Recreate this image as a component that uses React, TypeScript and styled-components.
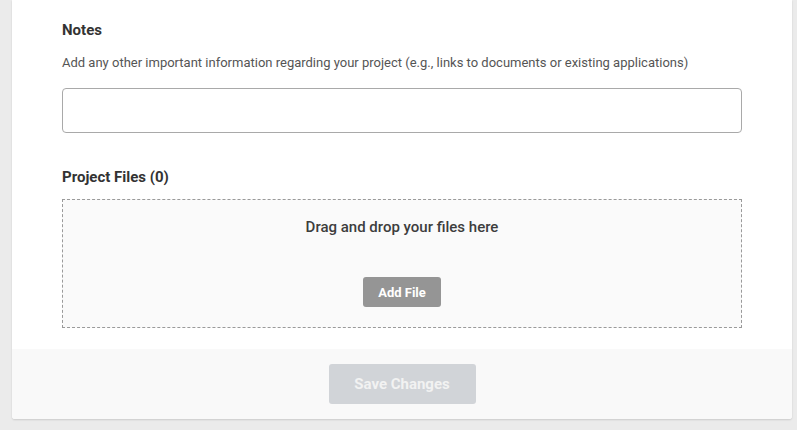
import React from "react";
import styled, { createGlobalStyle } from "styled-components";

const Global = createGlobalStyle`
  html, body { margin: 0; padding: 0; background: #ebebeb; }
  body { font-family: Roboto, "Liberation Sans", Arial, sans-serif; }
  * { box-sizing: border-box; }
`;

const Page = styled.div`
  padding: 0 5px 11px 12px;
`;

const Card = styled.div`
  width: 780px;
  background: #ffffff;
  border-radius: 0 0 3px 3px;
  box-shadow: 0 1px 2px rgba(0, 0, 0, 0.14);
  overflow: hidden;
`;

const Body = styled.div`
  padding: 20px 50px 21px;
  display: flex;
  flex-direction: column;
`;

const Label = styled.div<{ $gap: number }>`
  font-size: 15px;
  line-height: 20px;
  font-weight: 700;
  color: #333333;
  margin-bottom: ${(p) => p.$gap}px;
`;

const Hint = styled.div`
  font-size: 13px;
  line-height: 18px;
  color: #555555;
  margin-bottom: 16px;
`;

const TextInput = styled.input`
  height: 45px;
  width: 100%;
  border: 1px solid #a9a9a9;
  border-radius: 4px;
  background: #fff;
  margin-bottom: 34px;
  font: inherit;
  outline: none;
`;

const DropZone = styled.div`
  height: 129px;
  border: 1px dashed #9a9a9a;
  background: #fafafa;
  display: flex;
  flex-direction: column;
  align-items: center;
  padding-top: 17px;
`;

const DropText = styled.div`
  font-size: 15px;
  line-height: 20px;
  font-weight: 500;
  color: #3d3d3d;
  margin-bottom: 40px;
`;

const AddButton = styled.button`
  width: 78px;
  height: 30px;
  border: none;
  border-radius: 3px;
  background: #959595;
  color: #ffffff;
  font-family: Roboto, "Liberation Sans", Arial, sans-serif;
  font-size: 13px;
  font-weight: 700;
  padding: 0;
  cursor: pointer;
`;

const Footer = styled.div`
  height: 70px;
  background: #f9f9f9;
  display: flex;
  align-items: center;
  justify-content: center;
`;

const SaveButton = styled.button`
  width: 147px;
  height: 40px;
  border: none;
  border-radius: 3px;
  background: #d1d4d8;
  color: #f2f2f2;
  font-family: Roboto, "Liberation Sans", Arial, sans-serif;
  font-size: 15px;
  font-weight: 700;
  padding: 0;
`;

export default function App() {
  return (
    <>
      <Global />
      <Page>
        <Card>
          <Body>
            <Label $gap={14}>Notes</Label>
            <Hint>
              Add any other important information regarding your project (e.g., links to documents or existing applications)
            </Hint>
            <TextInput type="text" />
            <Label $gap={12}>Project Files (0)</Label>
            <DropZone>
              <DropText>Drag and drop your files here</DropText>
              <AddButton>Add File</AddButton>
            </DropZone>
          </Body>
          <Footer>
            <SaveButton disabled>Save Changes</SaveButton>
          </Footer>
        </Card>
      </Page>
    </>
  );
}
